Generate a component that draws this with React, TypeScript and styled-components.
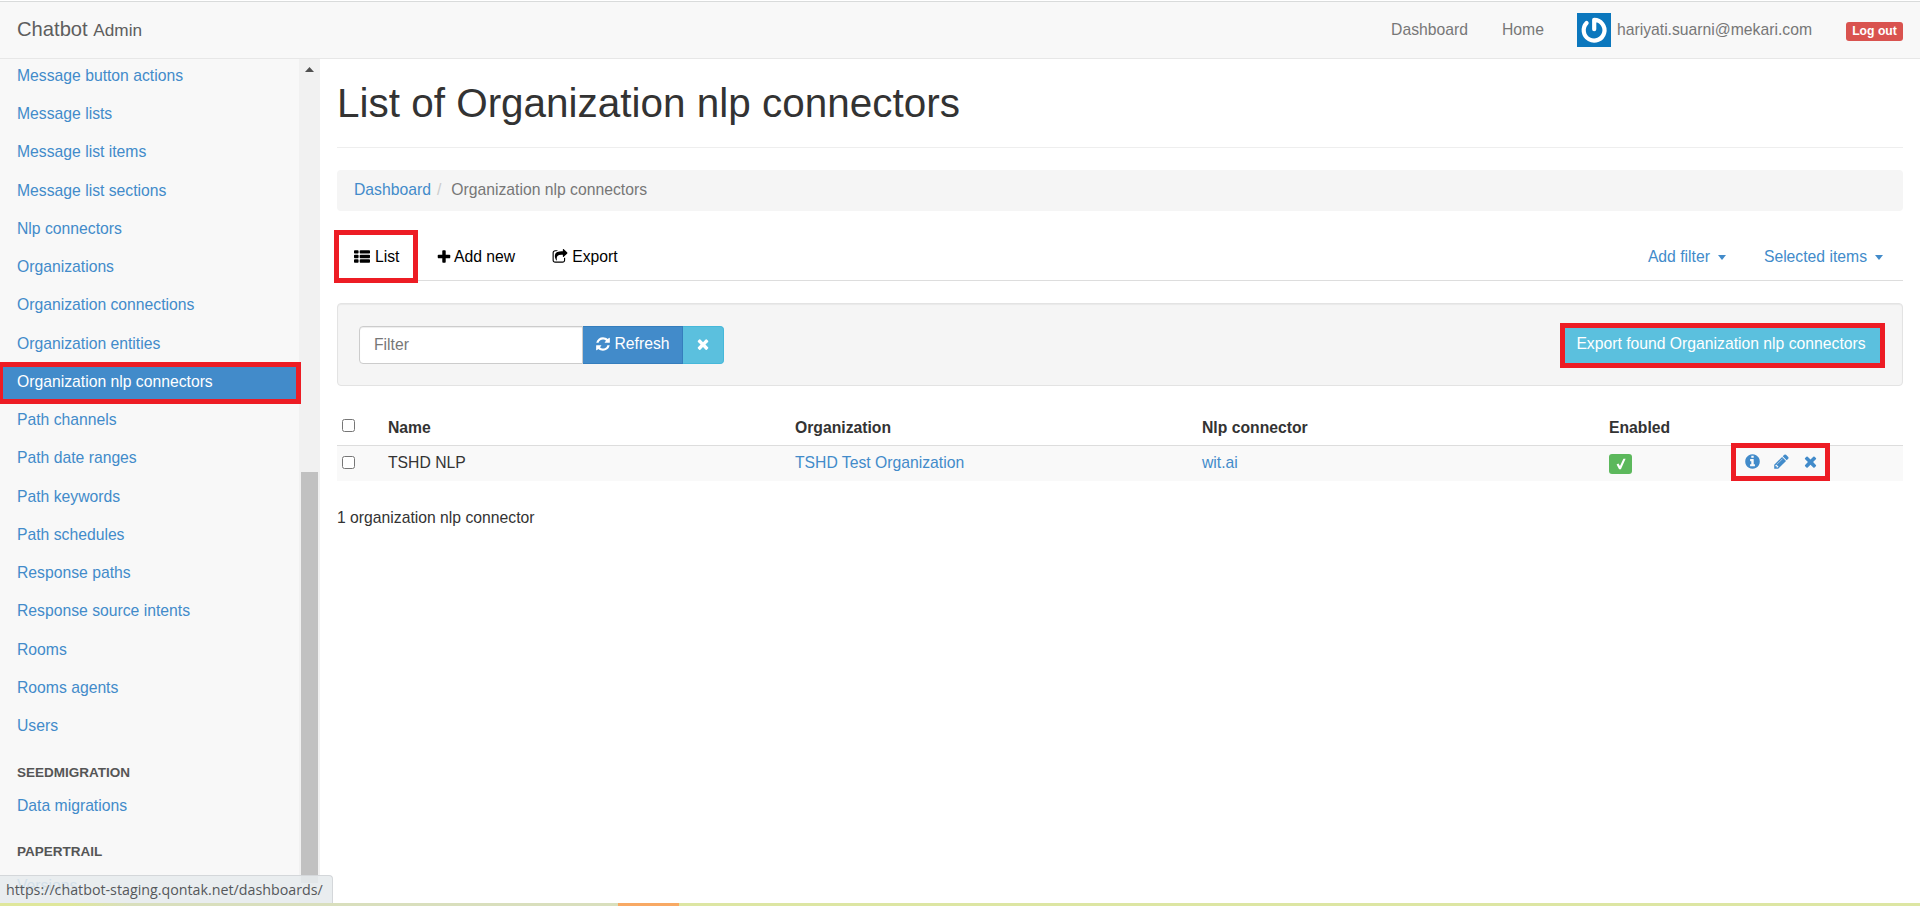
import React from 'react';
import styled, { createGlobalStyle } from 'styled-components';

const GlobalStyle = createGlobalStyle`
  * { box-sizing: border-box; }
  html, body { margin: 0; padding: 0; height: 100%; overflow: hidden; }
  body {
    font-family: "Liberation Sans", Arial, sans-serif;
    font-size: 15.72px;
    line-height: 22px;
    color: #333;
    background: #fff;
  }
  a { color: #428bca; text-decoration: none; }
`;

const RED = '#ed1c24';

const Page = styled.div`
  position: relative;
  height: 906px;
  overflow: hidden;
  display: flex;
  flex-direction: column;
`;

const Navbar = styled.header`
  height: 59px;
  border-top: 1px solid #fff;
  border-bottom: 1px solid #e7e7e7;
  background: #f8f8f8;
  box-shadow: inset 0 1px 0 #d9dbdb;
  display: flex;
  align-items: center;
  flex: none;
  padding: 0 17px;
  color: #777;
`;

const Brand = styled.div`
  flex: 1;
  font-size: 20.2px;
  color: #5e5e5e;
  small { font-size: 17.2px; }
`;

const NavText = styled.span<{ $gap: number }>`
  margin-right: ${p => p.$gap}px;
`;

const Avatar = styled.svg`
  width: 34px;
  height: 34px;
  margin: 1px 6px 0 0;
  display: block;
`;

const LogoutLabel = styled.span`
  width: 57px;
  height: 19px;
  margin-top: 4px;
  border-radius: 3px;
  background: #d9534f;
  color: #fff;
  font-size: 12.2px;
  font-weight: bold;
  line-height: 19px;
  text-align: center;
`;

const Body = styled.div`
  flex: 1;
  min-height: 0;
  display: flex;
`;

const Sidebar = styled.nav`
  flex: none;
  width: 299px;
  background: #f8f8f8;
`;

const SideItem = styled.a`
  display: block;
  height: 38.25px;
  padding: 5.9px 17px 0;
`;

const ActiveItem = styled.div`
  position: relative;
  z-index: 1;
  width: 303px;
  height: 42px;
  margin: -3px 0 -0.75px -2px;
  border: 5px solid ${RED};
  background: #428bca;
  color: #fff;
  padding: 4.2px 14px 0;
`;

const SideHeader = styled.div`
  height: 41.5px;
  padding: 14px 17px 0;
  font-size: 13.5px;
  font-weight: bold;
  color: #555;
`;

const Scrollbar = styled.div`
  flex: none;
  width: 21px;
  background: #f1f1f1;
  padding: 8px 2px 0;
  display: flex;
  flex-direction: column;
  align-items: center;
  svg { display: block; flex: none; }
`;

const Thumb = styled.div`
  flex: none;
  width: 17px;
  height: 411px;
  margin-top: 400px;
  background: #c1c1c1;
`;

const Content = styled.main`
  flex: 1;
  padding: 0 17px;
`;

const Title = styled.h1`
  margin: 0 0 22px;
  height: 89px;
  padding-top: 22px;
  border-bottom: 1px solid #eee;
  font-size: 40.46px;
  line-height: 44px;
  font-weight: normal;
`;

const Breadcrumb = styled.div`
  height: 41px;
  padding: 9px 17px;
  border-radius: 4px;
  background: #f5f5f5;
  color: #777;
  i { font-style: normal; color: #ccc; padding: 0 10px 0 6px; }
`;

const Tabs = styled.div`
  height: 51px;
  margin-top: 19px;
  border-bottom: 1px solid #ddd;
  display: flex;
  align-items: flex-start;
  color: #000;
`;

const Tab = styled.div<{ $boxed?: boolean; $gap: number }>`
  display: flex;
  align-items: center;
  height: 53px;
  margin-right: ${p => p.$gap}px;
  ${p => p.$boxed && `
    width: 84px;
    margin-left: -3px;
    padding-left: 15px;
    border: 5px solid ${RED};
  `}
`;

const MenuLink = styled.a<{ $gap: number }>`
  display: flex;
  align-items: center;
  height: 53px;
  margin-right: ${p => p.$gap}px;
`;

const Caret = styled.span`
  margin: 2px 0 0 8px;
  border: 4.5px solid transparent;
  border-width: 5px 4.5px 0;
  border-top-color: currentColor;
`;

const Spacer = styled.div`
  flex: 1;
`;

const Well = styled.div`
  display: flex;
  height: 83px;
  margin-top: 22px;
  padding: 22px 21px;
  border: 1px solid #e3e3e3;
  border-radius: 4px;
  background: #f5f5f5;
  box-shadow: inset 0 1px 1px rgba(0, 0, 0, 0.05);
`;

const FilterInput = styled.input`
  width: 224px;
  height: 38px;
  border: 1px solid #ccc;
  border-radius: 4px 0 0 4px;
  padding: 0 14px 1px;
  font: inherit;
  background: #fff;
  box-shadow: inset 0 1px 1px rgba(0, 0, 0, 0.075);
  &::placeholder { color: #777; opacity: 1; }
`;

const Button = styled.button<{ $kind: 'primary' | 'info'; $width: number }>`
  width: ${p => p.$width}px;
  height: 38px;
  padding: 0 0 2px;
  margin: 0;
  border: 1px solid ${p => (p.$kind === 'primary' ? '#357ebd' : '#46b8da')};
  border-left-width: 0;
  border-radius: ${p => (p.$kind === 'primary' ? '0' : '0 4px 4px 0')};
  background: ${p => (p.$kind === 'primary' ? '#428bca' : '#5bc0de')};
  color: #fff;
  font: inherit;
  display: flex;
  align-items: center;
  justify-content: center;
`;

const ExportButton = styled.button`
  width: 325px;
  height: 45px;
  margin: -3px -4px 0 0;
  padding: 0 3px 3px 0;
  border: 5px solid ${RED};
  background: #5bc0de;
  color: #fff;
  font: inherit;
`;

const Table = styled.table`
  width: 100%;
  margin-top: 22px;
  border-collapse: collapse;
  table-layout: fixed;
  th, td { text-align: left; padding: 0 5px; }
  th { height: 37px; padding-top: 3px; border-bottom: 1px solid #ddd; }
  td { height: 36px; background: #f9f9f9; padding-bottom: 1px; }
`;

const Checkbox = styled.input<{ $shift: number }>`
  display: block;
  width: 13px;
  height: 13px;
  margin: 0 0 ${p => p.$shift}px;
`;

const EnabledBadge = styled.span`
  display: flex;
  align-items: center;
  justify-content: center;
  width: 23px;
  height: 20px;
  margin-top: 2px;
  border-radius: 3px;
  background: #5cb85c;
`;

const Actions = styled.div`
  position: relative;
  display: flex;
  align-items: center;
  width: 99px;
  height: 38px;
  margin: -5px 0 -3px -1px;
  padding: 0 0 1px 8px;
  border: 5px solid ${RED};
  color: #428bca;
  gap: 12px;
`;

const Summary = styled.p`
  margin: 26px 0 0;
`;

const StatusBubble = styled.div`
  position: absolute;
  left: 0;
  bottom: 3px;
  width: 333px;
  height: 28px;
  padding: 3px 6px;
  border: 1px solid #d4d7da;
  border-left: 0;
  border-bottom: 0;
  border-radius: 0 4px 0 0;
  background: rgba(230, 234, 237, 0.88);
  color: #55585b;
  font-family: "Open Sans", sans-serif;
  font-size: 14.25px;
  line-height: 21px;
  white-space: nowrap;
  z-index: 3;
`;

const BottomStrip = styled.div`
  position: absolute;
  left: 0;
  right: 0;
  bottom: 0;
  height: 3px;
  z-index: 4;
  background: linear-gradient(90deg, #dfe79b 0, #dfe79b 70px, #d9dfbd 130px, #d9dfbd 618px, #f8a964 618px, #f8a964 679px, #dde6a3 679px);
`;

const paths = {
  list: 'M512 1248v192q0 40-28 68t-68 28h-320q-40 0-68-28t-28-68v-192q0-40 28-68t68-28h320q40 0 68 28t28 68zm0-512v192q0 40-28 68t-68 28h-320q-40 0-68-28t-28-68v-192q0-40 28-68t68-28h320q40 0 68 28t28 68zm1280 512v192q0 40-28 68t-68 28h-960q-40 0-68-28t-28-68v-192q0-40 28-68t68-28h960q40 0 68 28t28 68zm-1280-1024v192q0 40-28 68t-68 28h-320q-40 0-68-28t-28-68v-192q0-40 28-68t68-28h320q40 0 68 28t28 68zm1280 512v192q0 40-28 68t-68 28h-960q-40 0-68-28t-28-68v-192q0-40 28-68t68-28h960q40 0 68 28t28 68zm0-512v192q0 40-28 68t-68 28h-960q-40 0-68-28t-28-68v-192q0-40 28-68t68-28h960q40 0 68 28t28 68z',
  plus: 'M1600 736v192q0 40-28 68t-68 28h-416v416q0 40-28 68t-68 28h-192q-40 0-68-28t-28-68v-416h-416q-40 0-68-28t-28-68v-192q0-40 28-68t68-28h416v-416q0-40 28-68t68-28h192q40 0 68 28t28 68v416h416q40 0 68 28t28 68z',
  share: 'M1472 989v259q0 119-84.5 203.5t-203.5 84.5h-832q-119 0-203.5-84.5t-84.5-203.5v-832q0-119 84.5-203.5t203.5-84.5h255q13 0 22.5 9.5t9.5 22.5q0 27-26 32-77 26-133 60-10 4-16 4h-112q-66 0-113 47t-47 113v832q0 66 47 113t113 47h832q66 0 113-47t47-113v-214q0-19 18-29 28-13 54-37 16-16 35-8 21 9 21 31zm237-496l-384 384q-18 19-45 19-12 0-25-5-39-17-39-59v-192h-160q-323 0-438 131-119 137-74 473 3 23-20 34-8 2-12 2-16 0-26-13-10-14-21-31t-39.5-68.5-49.5-99.5-38.5-114-17.5-122q0-49 3.5-91t14-90 28-88 47-81.5 68.5-74 94.5-61.5 124.5-48.5 159.5-30.5 196.5-11h160v-192q0-42 39-59 13-5 25-5 26 0 45 19l384 384q19 19 19 45t-19 45z',
  refresh: 'M1639 1056q0 5-1 7-64 268-268 434.5t-478 166.5q-146 0-282.5-55t-243.5-157l-129 129q-19 19-45 19t-45-19-19-45v-448q0-26 19-45t45-19h448q26 0 45 19t19 45-19 45l-137 137q71 66 161 102t187 36q134 0 250-65t186-179q11-17 53-117 8-23 30-23h192q13 0 22.5 9.5t9.5 22.5zm25-800v448q0 26-19 45t-45 19h-448q-26 0-45-19t-19-45 19-45l138-138q-148-137-349-137-134 0-250 65t-186 179q-11 17-53 117-8 23-30 23h-199q-13 0-22.5-9.5t-9.5-22.5v-7q65-268 270-434.5t480-166.5q146 0 284 55.5t245 156.5l130-129q19-19 45-19t45 19 19 45z',
  times: 'M1490 1322q0 40-28 68l-136 136q-28 28-68 28t-68-28l-294-294-294 294q-28 28-68 28t-68-28l-136-136q-28-28-28-68t28-68l294-294-294-294q-28-28-28-68t28-68l136-136q28-28 68-28t68 28l294 294 294-294q28-28 68-28t68 28l136 136q28 28 28 68t-28 68l-294 294 294 294q28 28 28 68z',
  info: 'M1152 1376v-160q0-14-9-23t-23-9h-96v-512q0-14-9-23t-23-9h-320q-14 0-23 9t-9 23v160q0 14 9 23t23 9h96v320h-96q-14 0-23 9t-9 23v160q0 14 9 23t23 9h448q14 0 23-9t9-23zm-128-896v-160q0-14-9-23t-23-9h-192q-14 0-23 9t-9 23v160q0 14 9 23t23 9h192q14 0 23-9t9-23zm640 416q0 209-103 385.5t-279.5 279.5-385.5 103-385.5-103-279.5-279.5-103-385.5 103-385.5 279.5-279.5 385.5-103 385.5 103 279.5 279.5 103 385.5z',
  pencil: 'M491 1536l91-91-235-235-91 91v107h128v128h107zm523-928q0-22-22-22-10 0-17 7l-542 542q-7 7-7 17 0 22 22 22 10 0 17-7l542-542q7-7 7-17zm-54-192l416 416-832 832h-416v-416zm683 96q0 53-37 90l-166 166-416-416 166-165q36-38 90-38 53 0 91 38l235 234q37 39 37 91z',
};

const IconSvg = styled.svg<{ $gap: number }>`
  display: block;
  flex: none;
  margin-right: ${p => p.$gap}px;
  fill: currentColor;
`;

function Icon({ name, gap = 0, size = 16 }: { name: keyof typeof paths; gap?: number; size?: number }) {
  return (
    <IconSvg $gap={gap} width={size} height={size} viewBox="0 0 1792 1792">
      <path d={paths[name]} />
    </IconSvg>
  );
}

const before = [
  'Message button actions', 'Message lists', 'Message list items', 'Message list sections',
  'Nlp connectors', 'Organizations', 'Organization connections', 'Organization entities',
];
const after = [
  'Path channels', 'Path date ranges', 'Path keywords', 'Path schedules', 'Response paths',
  'Response source intents', 'Rooms', 'Rooms agents', 'Users',
];

export default function App() {
  return (
    <>
      <GlobalStyle />
      <Page>
        <Navbar>
          <Brand>Chatbot <small>Admin</small></Brand>
          <NavText $gap={34}>Dashboard</NavText>
          <NavText $gap={33}>Home</NavText>
          <Avatar viewBox="0 0 34 34">
            <rect width="34" height="34" fill="#0b77bd" />
            <path
              d="M17.2 16.2V6.8A10.4 10.4 0 1 1 9.6 10"
              fill="none"
              stroke="#fff"
              strokeWidth="4.2"
              strokeLinecap="round"
              strokeLinejoin="round"
            />
          </Avatar>
          <NavText $gap={34}>hariyati.suarni@mekari.com</NavText>
          <LogoutLabel>Log out</LogoutLabel>
        </Navbar>
        <Body>
          <Sidebar>
            {before.map(t => <SideItem key={t} href="#">{t}</SideItem>)}
            <ActiveItem>Organization nlp connectors</ActiveItem>
            {after.map(t => <SideItem key={t} href="#">{t}</SideItem>)}
            <SideHeader>SEEDMIGRATION</SideHeader>
            <SideItem href="#">Data migrations</SideItem>
            <SideHeader>PAPERTRAIL</SideHeader>
            <SideItem href="#">Versions</SideItem>
          </Sidebar>
          <Scrollbar>
            <svg width="9" height="5" viewBox="0 0 9 5"><path d="M0 5L4.5 0L9 5Z" fill="#505050" /></svg>
            <Thumb />
          </Scrollbar>
          <Content>
            <Title>List of Organization nlp connectors</Title>
            <Breadcrumb><a href="#">Dashboard</a><i>/</i>Organization nlp connectors</Breadcrumb>
            <Tabs>
              <Tab $boxed $gap={18}><Icon name="list" gap={5} />List</Tab>
              <Tab $gap={37}><Icon name="plus" gap={2} />Add new</Tab>
              <Tab $gap={0}><Icon name="share" gap={4} />Export</Tab>
              <Spacer />
              <MenuLink href="#" $gap={38}>Add filter<Caret /></MenuLink>
              <MenuLink href="#" $gap={20}>Selected items<Caret /></MenuLink>
            </Tabs>
            <Well>
              <FilterInput placeholder="Filter" />
              <Button $kind="primary" $width={100}><Icon name="refresh" gap={3} />Refresh</Button>
              <Button $kind="info" $width={41}><Icon name="times" /></Button>
              <Spacer />
              <ExportButton>Export found Organization nlp connectors</ExportButton>
            </Well>
            <Table>
              <colgroup>
                <col style={{ width: 46 }} />
                <col style={{ width: 407 }} />
                <col style={{ width: 407 }} />
                <col style={{ width: 407 }} />
                <col style={{ width: 123 }} />
                <col />
              </colgroup>
              <thead>
                <tr>
                  <th><Checkbox $shift={4} type="checkbox" /></th>
                  <th>Name</th>
                  <th>Organization</th>
                  <th>Nlp connector</th>
                  <th>Enabled</th>
                  <th />
                </tr>
              </thead>
              <tbody>
                <tr>
                  <td><Checkbox $shift={0} type="checkbox" /></td>
                  <td>TSHD NLP</td>
                  <td><a href="#">TSHD Test Organization</a></td>
                  <td><a href="#">wit.ai</a></td>
                  <td>
                    <EnabledBadge>
                      <svg width="10" height="12" viewBox="0 0 10 12"><path d="M0.6 6.6L2.4 5.4L4 8L7.4 0.8L9.6 0.8L4.9 11.2L3.1 11.2Z" fill="#fff" /></svg>
                    </EnabledBadge>
                  </td>
                  <td>
                    <Actions>
                      <Icon name="info" size={17} />
                      <Icon name="pencil" size={17} />
                      <Icon name="times" size={17} />
                    </Actions>
                  </td>
                </tr>
              </tbody>
            </Table>
            <Summary>1 organization nlp connector</Summary>
          </Content>
        </Body>
        <StatusBubble>https://chatbot-staging.qontak.net/dashboards/</StatusBubble>
        <BottomStrip />
      </Page>
    </>
  );
}
